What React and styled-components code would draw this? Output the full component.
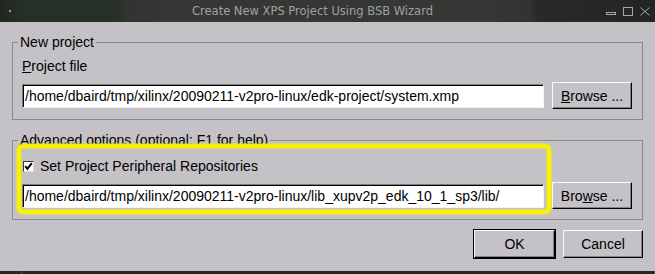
import React from "react";
import styled, { createGlobalStyle } from "styled-components";

const GlobalStyle = createGlobalStyle`
  html, body {
    margin: 0;
    padding: 0;
    background: #c4c2c6;
  }
  body {
    font-family: "Liberation Sans", Arial, sans-serif;
    font-size: 14px;
    color: #000;
  }
`;

const Window = styled.div`
  width: 655px;
  height: 274px;
  display: flex;
  flex-direction: column;
  background: #c4c2c6;
  overflow: hidden;
`;

const TitleBar = styled.div`
  height: 22px;
  flex: none;
  display: flex;
  align-items: center;
  background: linear-gradient(
    to right,
    #222622 0%,
    #263026 4%,
    #273027 18%,
    #303330 19%,
    #353735 25%,
    #353735 75%,
    #303330 81%,
    #272a27 82%,
    #232523 100%
  );
`;

const MenuArea = styled.div`
  width: 24px;
  display: flex;
  padding-left: 9px;
  box-sizing: border-box;
`;

const MenuDot = styled.span`
  width: 2px;
  height: 2px;
  background: #9c9c9c;
`;

const Title = styled.div`
  flex: 1;
  text-align: center;
  font-family: "DejaVu Sans", sans-serif;
  font-size: 11.5px;
  color: #a0a0a0;
  white-space: nowrap;
`;

const Controls = styled.div`
  width: 54px;
  box-sizing: border-box;
  padding-right: 5px;
  display: flex;
  justify-content: flex-end;
  gap: 7px;
  color: #a8a8a8;
`;

const Body = styled.div`
  flex: 1;
  padding: 12px 12px 0 12px;
  display: flex;
  flex-direction: column;
`;

const Group = styled.fieldset`
  margin: 0 0 ${p => p.$gap || 0}px 0;
  padding: 0 10px ${p => p.$bottom}px 9px;
  border: 1px solid #89888b;
  min-width: 0;
`;

const Caption = styled.legend`
  padding: 0 2px;
  margin-left: -4px;
  line-height: 16px;
  font-size: 14px;
`;

const Content = styled.div`
  position: relative;
  padding-top: ${p => p.$top}px;
`;

const Label = styled.div`
  line-height: 16px;
  margin-bottom: 8px;
`;

const Mnemonic = styled.span`
  text-decoration: underline;
`;

const PathRow = styled.div`
  display: flex;
  align-items: center;
  gap: 8px;
`;

const PathInput = styled.input`
  flex: 1;
  min-width: 0;
  height: 24px;
  box-sizing: border-box;
  margin: 0;
  padding: 0 2px;
  font-family: "Liberation Sans", Arial, sans-serif;
  font-size: 14px;
  color: #000;
  background: #fff;
  border: 1px solid;
  border-color: #7c7b7e #f4f4f4 #f4f4f4 #7c7b7e;
  box-shadow: inset 1px 1px 0 #000;
  outline: none;
`;

const Button = styled.button`
  width: ${p => p.$width || 80}px;
  height: ${p => p.$height || 27}px;
  flex: none;
  margin: 0;
  padding: 0;
  font-family: "Liberation Sans", Arial, sans-serif;
  font-size: 14px;
  color: #000;
  background: #c4c2c6;
  border: 1px solid;
  border-color: #fbfbfb #000 #000 #fbfbfb;
  box-shadow: inset -1px -1px 0 #858488;
  outline: ${p => (p.$default ? "1px solid #000" : "none")};
`;

const CheckRow = styled.label`
  display: flex;
  align-items: center;
  gap: 6px;
  line-height: 16px;
  margin-bottom: 8px;
  padding-left: 1px;
`;

const CheckBox = styled.span`
  width: 11px;
  height: 11px;
  box-sizing: border-box;
  background: #fff;
  border: 1px solid;
  border-color: #3a3a3a #d8d8d8 #d8d8d8 #3a3a3a;
  display: flex;
  align-items: center;
  justify-content: center;
`;

const Highlight = styled.div`
  position: absolute;
  left: -5px;
  top: ${p => p.$top}px;
  width: 534px;
  height: 70px;
  box-sizing: border-box;
  border: 4px solid #f8f200;
  border-radius: 6px;
  box-shadow: 0 0 1px 1px rgba(240, 232, 40, 0.55),
    inset 0 0 1px 1px rgba(240, 232, 40, 0.55);
  pointer-events: none;
`;

const Actions = styled.div`
  display: flex;
  justify-content: flex-end;
  gap: 8px;
  margin-top: 10px;
`;

const Taskbar = styled.div`
  height: 3px;
  flex: none;
  background: #262626;
  display: flex;
`;

const TaskSlot = styled.span`
  width: ${p => p.$width}px;
  flex: ${p => (p.$grow ? 1 : "none")};
  border-right: 1px solid #4a4a4a;
`;

const App = () => (
  <>
    <GlobalStyle />
    <Window>
      <TitleBar>
        <MenuArea>
          <MenuDot />
        </MenuArea>
        <Title>Create New XPS Project Using BSB Wizard</Title>
        <Controls>
          <svg width="10" height="9" viewBox="0 0 10 9">
            <rect x="0.5" y="5.5" width="9" height="2" fill="none" stroke="currentColor" />
          </svg>
          <svg width="10" height="9" viewBox="0 0 10 9">
            <rect x="0.5" y="0.5" width="9" height="8" fill="none" stroke="currentColor" />
          </svg>
          <svg width="10" height="9" viewBox="0 0 10 9">
            <path d="M0.5 0.5 L9.5 8.5 M9.5 0.5 L0.5 8.5" stroke="currentColor" strokeWidth="1" />
          </svg>
        </Controls>
      </TitleBar>

      <Body>
        <Group $bottom={10} $gap={12}>
          <Caption>New project</Caption>
          <Content $top={8}>
            <Label>
              <Mnemonic>P</Mnemonic>roject file
            </Label>
            <PathRow>
              <PathInput
                readOnly
                value="/home/dbaird/tmp/xilinx/20090211-v2pro-linux/edk-project/system.xmp"
              />
              <Button>
                <Mnemonic>B</Mnemonic>rowse ...
              </Button>
            </PathRow>
          </Content>
        </Group>

        <Group $bottom={10}>
          <Caption>Advanced options (optional: F1 for help)</Caption>
          <Content $top={10}>
            <CheckRow>
              <CheckBox>
                <svg width="9" height="9" viewBox="0 0 9 9">
                  <path d="M1.2 4.2 L3.4 6.8 L7.8 1.2" fill="none" stroke="#000" strokeWidth="2" />
                </svg>
              </CheckBox>
              Set Project Peripheral Repositories
            </CheckRow>
            <PathRow>
              <PathInput
                readOnly
                value="/home/dbaird/tmp/xilinx/20090211-v2pro-linux/lib_xupv2p_edk_10_1_sp3/lib/"
              />
              <Button>
                Bro<Mnemonic>w</Mnemonic>se ...
              </Button>
            </PathRow>
            <Highlight $top={-4} />
          </Content>
        </Group>

        <Actions>
          <Button $width={81} $height={28} $default>
            OK
          </Button>
          <Button $width={80} $height={28}>
            Cancel
          </Button>
        </Actions>
      </Body>

      <Taskbar>
        <TaskSlot $width={21} />
        <TaskSlot $grow />
      </Taskbar>
    </Window>
  </>
);

export default App;
